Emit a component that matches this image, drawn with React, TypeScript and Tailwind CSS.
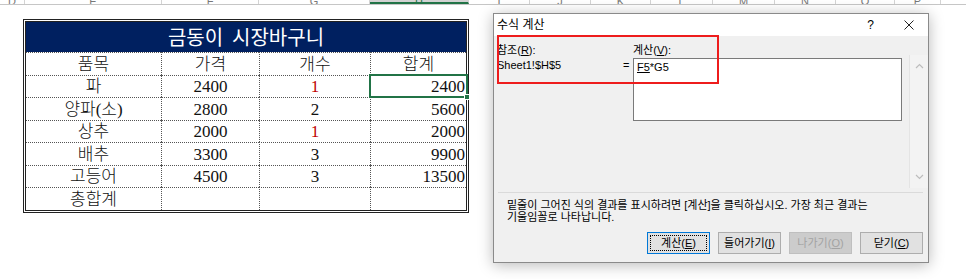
const cols = [
  { l: "D", w: 25 },
  { l: "E", w: 137 },
  { l: "F", w: 97 },
  { l: "G", w: 111 },
  { l: "H", w: 99, sel: true },
  { l: "I", w: 61 },
  { l: "J", w: 61 },
  { l: "K", w: 60 },
  { l: "L", w: 62 },
  { l: "M", w: 62 },
  { l: "N", w: 61 },
  { l: "O", w: 59 },
  { l: "P", w: 46 },
  { l: "Q", w: 60 },
];

const rows = [
  ["파", "2400", "1", "2400"],
  ["양파(소)", "2800", "2", "5600"],
  ["상추", "2000", "1", "2000"],
  ["배추", "3300", "3", "9900"],
  ["고등어", "4500", "3", "13500"],
  ["총합계", "", "", ""],
];

const serif = { fontFamily: '"Liberation Serif", "Noto Sans CJK KR", serif' };
const ui = { fontFamily: '"Liberation Sans", "Noto Sans CJK KR", sans-serif' };

function Cell({ children, first, right, red, sel }: { children?: React.ReactNode; first?: boolean; right?: boolean; red?: boolean; sel?: boolean }) {
  return (
    <div
      className={`relative h-[22.5px] border-t border-dotted border-[#555] flex items-center pt-[2px] text-[17px] leading-[20px] font-light ${first ? "" : "border-l"} ${right ? "justify-end pr-[1px]" : "justify-center"} ${red ? "text-[#c00000]" : "text-[#111]"}`}
    >
      {children}
      {sel && (
        <>
          <div className="absolute -left-[2px] -top-[2px] -right-[2px] -bottom-[1px] border-2 border-[#217346] z-10" />
          <div className="absolute -right-[4px] -bottom-[3px] w-[6px] h-[6px] bg-[#217346] border border-white z-20" />
        </>
      )}
    </div>
  );
}

function Btn({ label, k, focus, disabled }: { label: string; k: string; focus?: boolean; disabled?: boolean }) {
  return (
    <div
      className={`w-[63px] h-[22px] flex items-center justify-center text-[11px] leading-[14px] border ${
        focus
          ? "border-[#0078d7] bg-[#e1e1e1] text-black"
          : disabled
          ? "border-[#bfbfbf] bg-[#cccccc] text-[#a3a3a3]"
          : "border-[#adadad] bg-[#e1e1e1] text-black"
      }`}
    >
      <div className={`flex items-center justify-center ${focus ? "border border-dotted border-black w-[57px] h-[16px]" : ""}`}>
        {label}(<span className="underline">{k}</span>)
      </div>
    </div>
  );
}

function Chevron({ up }: { up?: boolean }) {
  return (
    <svg width="9" height="6" viewBox="0 0 9 6" className="block">
      <path d={up ? "M1 5 L4.5 1.5 L8 5" : "M1 1 L4.5 4.5 L8 1"} fill="none" stroke="#bdbdbd" strokeWidth="1.2" />
    </svg>
  );
}

export default function App() {
  return (
    <div className="relative w-[966px] h-[279px] bg-white overflow-hidden" style={ui}>
      {/* column headers, cut off at the top */}
      <div className="flex h-[5px] border-b border-[#c6c6c6] overflow-hidden">
        {cols.map((c) => (
          <div
            key={c.l}
            style={{ width: c.w }}
            className={`shrink-0 border-r border-[#d4d4d4] flex items-end justify-center text-[11px] leading-[6px] text-[#777] ${
              c.sel ? "bg-[#d2d2d2] border-b-2 border-b-[#217346] text-[#217346]" : ""
            }`}
          >
            {c.l}
          </div>
        ))}
      </div>

      {/* sheet table */}
      <div className="ml-[23px] mt-[14px] w-[446px] border-[3px] border-double border-[#222]" style={serif}>
        <div className="h-[30px] bg-[#002060] text-white text-[20px] leading-[24px] flex items-center justify-center" style={{ fontFamily: '"Noto Sans CJK KR", serif' }}>
          금동이&nbsp;&nbsp;시장바구니
        </div>
        <div className="grid grid-cols-[135px_98px_111px_96px]">
          <Cell first>품목</Cell>
          <Cell>가격</Cell>
          <Cell>개수</Cell>
          <Cell>합계</Cell>
          {rows.map((r, i) => (
            <div key={i} className="contents">
              <Cell first>{r[0]}</Cell>
              <Cell>{r[1]}</Cell>
              <Cell red={r[2] === "1"}>{r[2]}</Cell>
              <Cell right sel={i === 0}>{r[3]}</Cell>
            </div>
          ))}
        </div>
      </div>

      {/* formula evaluation dialog */}
      <div className="absolute left-[493px] top-[13px] w-[436px] border border-[#8a8a8a] bg-[#f0f0f0] shadow-[0_2px_14px_rgba(0,0,0,0.28)] flex flex-col text-black">
        <div className="h-[22px] bg-white flex items-center text-[12px] leading-[14px]">
          <span className="pl-[3px]">수식 계산</span>
          <span className="ml-auto">?</span>
          <svg width="10" height="10" viewBox="0 0 10 10" className="ml-[30px] mr-[14px]">
            <path d="M0.5 0.5 L9.5 9.5 M9.5 0.5 L0.5 9.5" stroke="#222" strokeWidth="1" />
          </svg>
        </div>

        <div className="relative flex flex-col pb-[8px]">
          <div className="absolute left-[3px] -top-[1px] w-[222px] h-[49px] border-2 border-[#ee1c1c] z-10" />

          <div className="flex h-[154px] text-[11px] leading-[14px]">
            <div className="w-[129px] pl-[3px] pt-[7px] flex flex-col">
              <span>
                참조(<span className="underline">R</span>):
              </span>
              <span className="mt-[1px]">Sheet1!$H$5</span>
            </div>
            <div className="w-[10px] pt-[22px]">=</div>
            <div className="w-[269px] pt-[7px] flex flex-col">
              <span>
                계산(<span className="underline">V</span>):
              </span>
              <div className="mt-[1px] h-[63px] border border-[#7a7a7a] bg-white pl-[3px] pt-[1px]">
                <span className="underline">F5</span>*G5
              </div>
            </div>
            <div className="ml-[7px] mt-[19px] w-[19px] h-[133px] bg-[#f3f3f3] border-l border-[#e4e4e4] flex flex-col items-center justify-between py-[8px]">
              <Chevron up />
              <Chevron />
            </div>
          </div>

          <div className="mt-[2px] ml-[4px] mr-[5px] h-px bg-[#dadada]" />

          <div className="pl-[13px] mt-[7px] text-[11px] leading-[11.7px]">
            <div>밑줄이 그어진 식의 결과를 표시하려면 [계산]을 클릭하십시오. 가장 최근 결과는</div>
            <div>기울임꼴로 나타납니다.</div>
          </div>

          <div className="mt-[9px] flex justify-end gap-[8px] pr-[5px]">
            <Btn label="계산" k="E" focus />
            <Btn label="들어가기" k="I" />
            <Btn label="나가기" k="O" disabled />
            <Btn label="닫기" k="C" />
          </div>
        </div>
      </div>
    </div>
  );
}
